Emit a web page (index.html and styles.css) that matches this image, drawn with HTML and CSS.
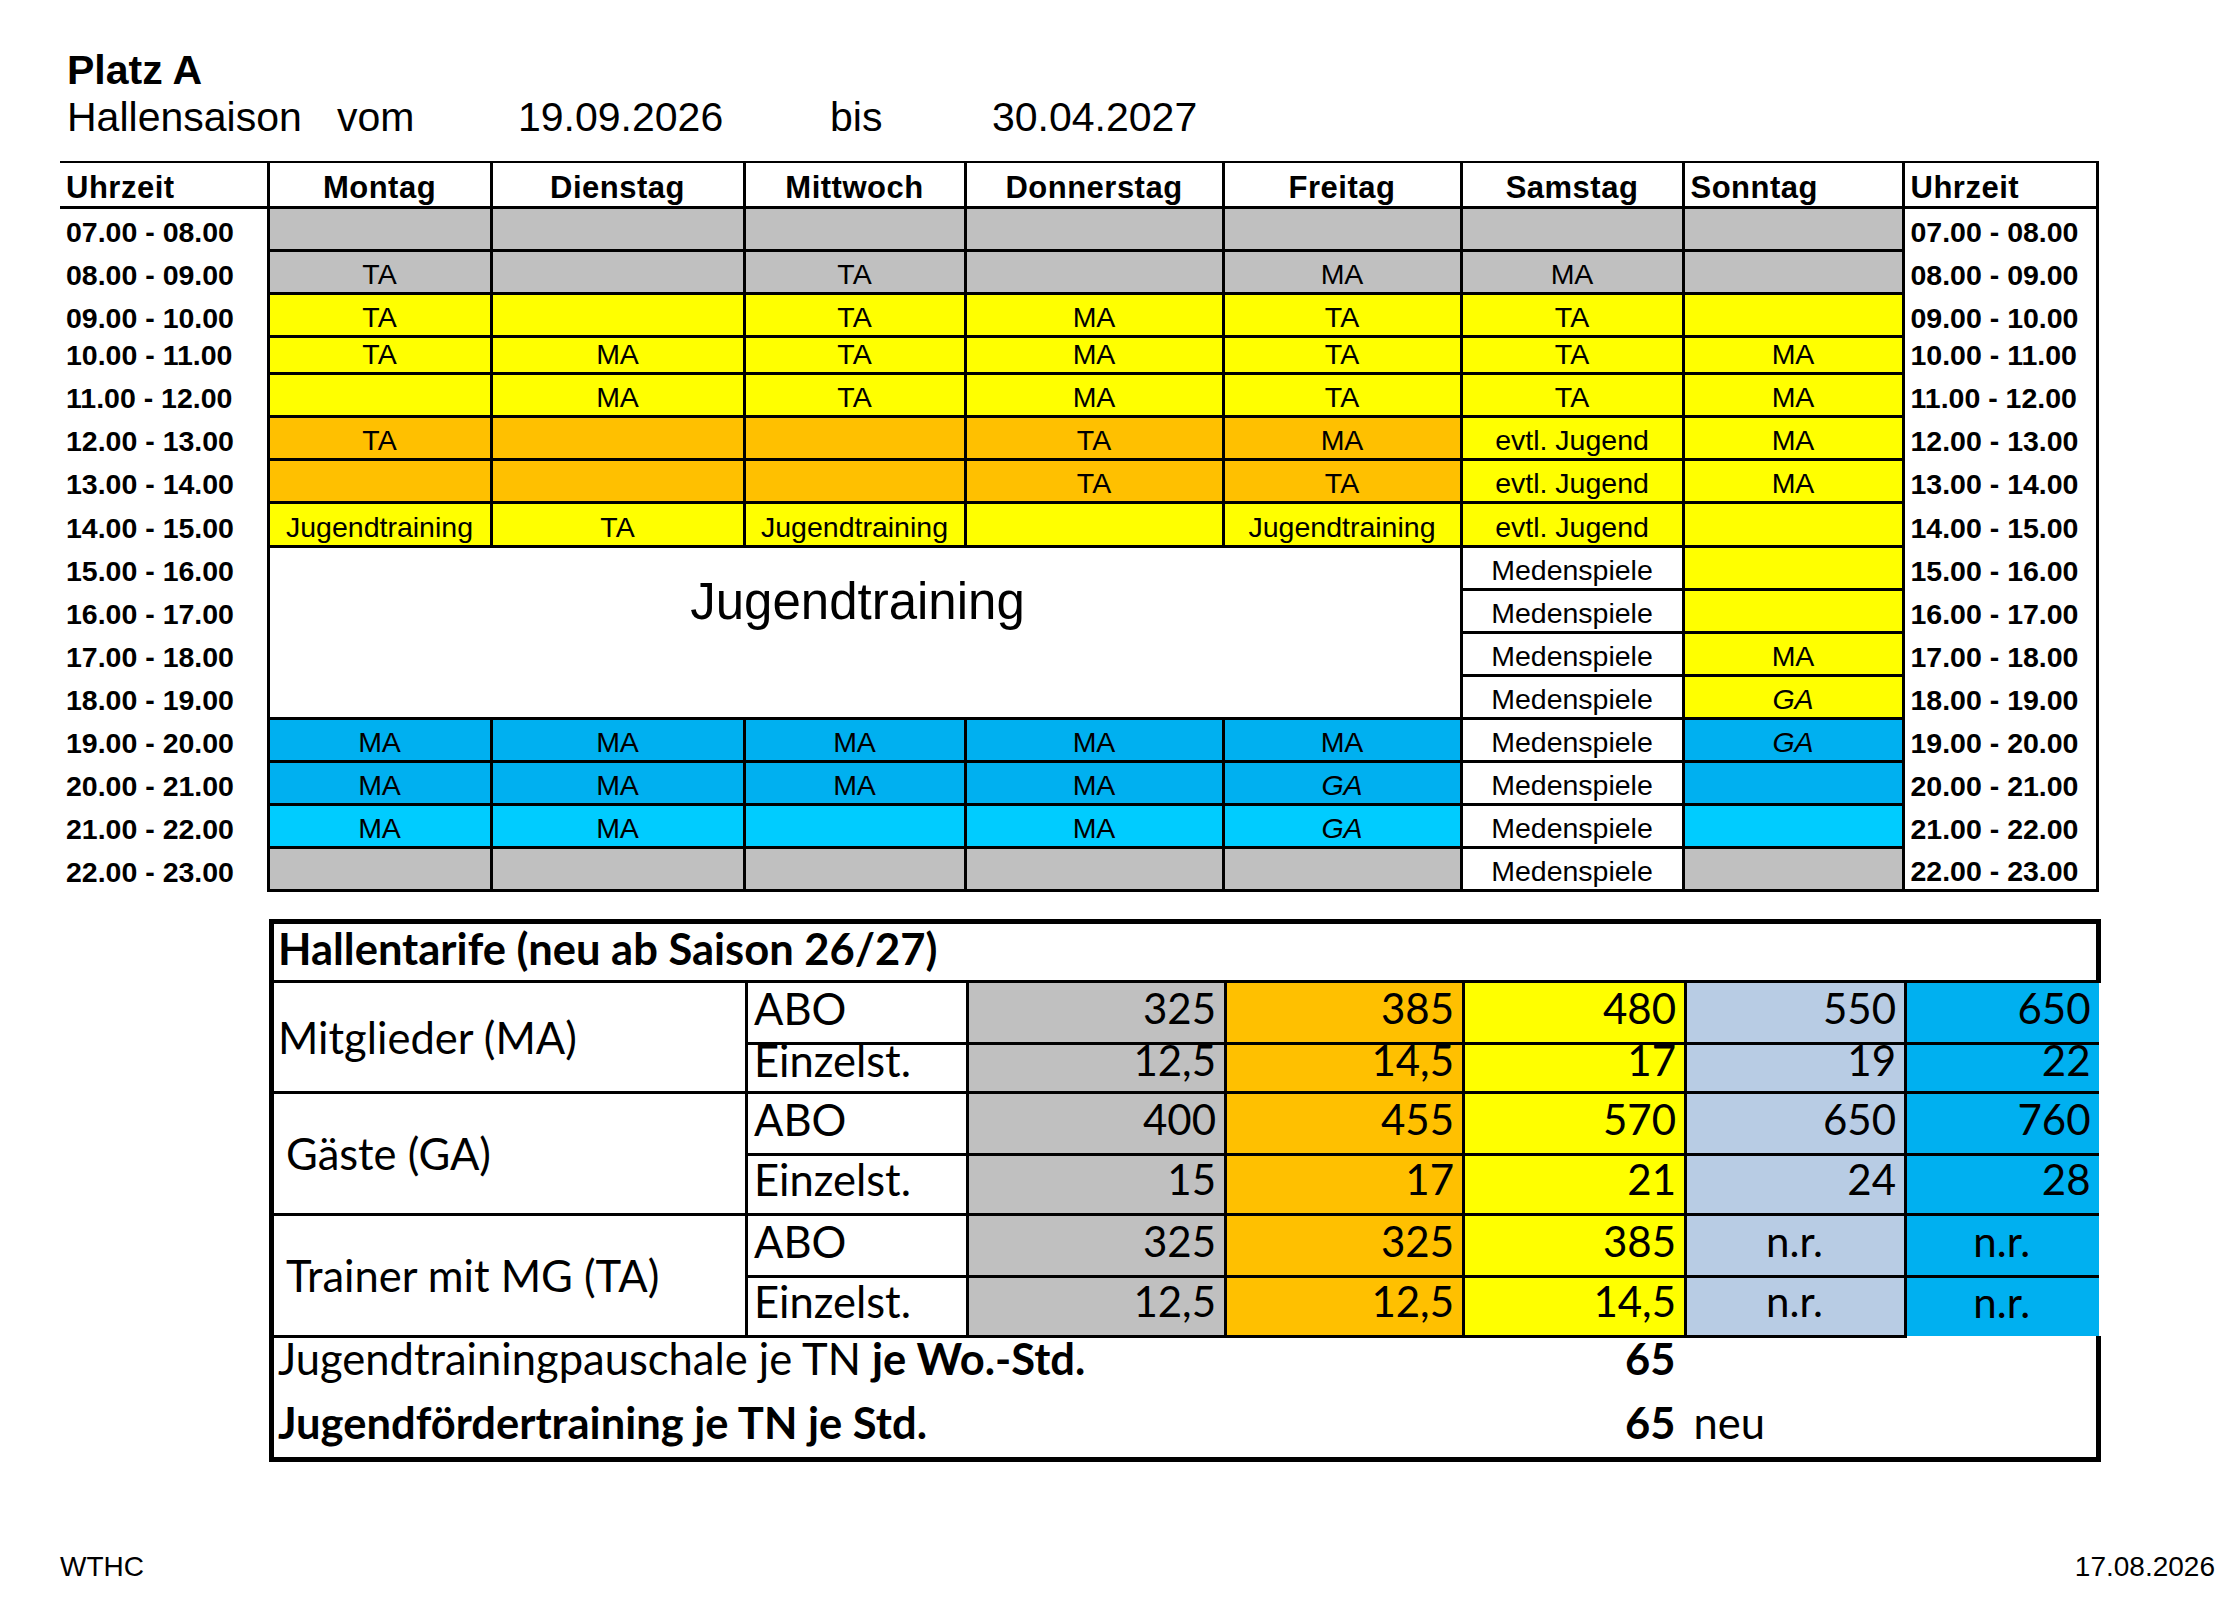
FILE: index.html
```html
<!DOCTYPE html>
<html lang="de">
<head>
  <meta charset="UTF-8">
  <title>Platz A - Hallensaison</title>
  <link rel="stylesheet" href="styles.css">
</head>
<body>

<div class="page">
  <div class="platz">Platz A</div>
  <div class="saison">
    <span class="s1">Hallensaison</span>
    <span class="s2">vom</span>
    <span class="s3">19.09.2026</span>
    <span class="s4">bis</span>
    <span>30.04.2027</span>
  </div>

  <table class="plan">
    <colgroup>
      <col style="width:208px"><col style="width:223px"><col style="width:253px"><col style="width:221px"><col style="width:258px"><col style="width:238px"><col style="width:222px"><col style="width:220px"><col style="width:194px">
    </colgroup>
    <tr class="rh">
      <th class="t l">Uhrzeit</th>
      <th>Montag</th>
      <th>Dienstag</th>
      <th>Mittwoch</th>
      <th>Donnerstag</th>
      <th>Freitag</th>
      <th>Samstag</th>
      <th class="l">Sonntag</th>
      <th class="tr l">Uhrzeit</th>
    </tr>
    <tr>
      <td class="t">07.00 - 08.00</td>
      <td class="g"></td><td class="g"></td><td class="g"></td><td class="g"></td><td class="g"></td><td class="g"></td><td class="g"></td>
      <td class="tr">07.00 - 08.00</td>
    </tr>
    <tr>
      <td class="t">08.00 - 09.00</td>
      <td class="g">TA</td><td class="g"></td><td class="g">TA</td><td class="g"></td><td class="g">MA</td><td class="g">MA</td><td class="g"></td>
      <td class="tr">08.00 - 09.00</td>
    </tr>
    <tr>
      <td class="t">09.00 - 10.00</td>
      <td class="y">TA</td><td class="y"></td><td class="y">TA</td><td class="y">MA</td><td class="y">TA</td><td class="y">TA</td><td class="y"></td>
      <td class="tr">09.00 - 10.00</td>
    </tr>
    <tr class="rs">
      <td class="t">10.00 - 11.00</td>
      <td class="y">TA</td><td class="y">MA</td><td class="y">TA</td><td class="y">MA</td><td class="y">TA</td><td class="y">TA</td><td class="y">MA</td>
      <td class="tr">10.00 - 11.00</td>
    </tr>
    <tr>
      <td class="t">11.00 - 12.00</td>
      <td class="y"></td><td class="y">MA</td><td class="y">TA</td><td class="y">MA</td><td class="y">TA</td><td class="y">TA</td><td class="y">MA</td>
      <td class="tr">11.00 - 12.00</td>
    </tr>
    <tr>
      <td class="t">12.00 - 13.00</td>
      <td class="o">TA</td><td class="o"></td><td class="o"></td><td class="o">TA</td><td class="o">MA</td><td class="y">evtl. Jugend</td><td class="y">MA</td>
      <td class="tr">12.00 - 13.00</td>
    </tr>
    <tr>
      <td class="t">13.00 - 14.00</td>
      <td class="o"></td><td class="o"></td><td class="o"></td><td class="o">TA</td><td class="o">TA</td><td class="y">evtl. Jugend</td><td class="y">MA</td>
      <td class="tr">13.00 - 14.00</td>
    </tr>
    <tr class="rl">
      <td class="t">14.00 - 15.00</td>
      <td class="y">Jugendtraining</td><td class="y">TA</td><td class="y">Jugendtraining</td><td class="y"></td><td class="y">Jugendtraining</td><td class="y">evtl. Jugend</td><td class="y"></td>
      <td class="tr">14.00 - 15.00</td>
    </tr>
    <tr>
      <td class="t">15.00 - 16.00</td>
      <td class="big" colspan="5" rowspan="4">Jugendtraining</td>
      <td class="w">Medenspiele</td><td class="y"></td>
      <td class="tr">15.00 - 16.00</td>
    </tr>
    <tr>
      <td class="t">16.00 - 17.00</td>
      <td class="w">Medenspiele</td><td class="y"></td>
      <td class="tr">16.00 - 17.00</td>
    </tr>
    <tr>
      <td class="t">17.00 - 18.00</td>
      <td class="w">Medenspiele</td><td class="y">MA</td>
      <td class="tr">17.00 - 18.00</td>
    </tr>
    <tr>
      <td class="t">18.00 - 19.00</td>
      <td class="w">Medenspiele</td><td class="y i">GA</td>
      <td class="tr">18.00 - 19.00</td>
    </tr>
    <tr>
      <td class="t">19.00 - 20.00</td>
      <td class="b">MA</td><td class="b">MA</td><td class="b">MA</td><td class="b">MA</td><td class="b">MA</td><td class="w">Medenspiele</td><td class="b i">GA</td>
      <td class="tr">19.00 - 20.00</td>
    </tr>
    <tr>
      <td class="t">20.00 - 21.00</td>
      <td class="b">MA</td><td class="b">MA</td><td class="b">MA</td><td class="b">MA</td><td class="b i">GA</td><td class="w">Medenspiele</td><td class="b"></td>
      <td class="tr">20.00 - 21.00</td>
    </tr>
    <tr>
      <td class="t">21.00 - 22.00</td>
      <td class="c">MA</td><td class="c">MA</td><td class="c"></td><td class="c">MA</td><td class="c i">GA</td><td class="w">Medenspiele</td><td class="c"></td>
      <td class="tr">21.00 - 22.00</td>
    </tr>
    <tr class="last">
      <td class="t">22.00 - 23.00</td>
      <td class="g"></td><td class="g"></td><td class="g"></td><td class="g"></td><td class="g"></td><td class="w">Medenspiele</td><td class="g"></td>
      <td class="tr">22.00 - 23.00</td>
    </tr>
  </table>

  <table class="tarif">
    <colgroup>
      <col style="width:475px"><col style="width:221px"><col style="width:258px"><col style="width:238px"><col style="width:222px"><col style="width:220px"><col style="width:193px">
    </colgroup>
    <tr class="r-title">
      <td class="title" colspan="7">Hallentarife (neu ab Saison 26/27)</td>
    </tr>
    <tr class="r62">
      <td class="lbl" rowspan="2">Mitglieder (MA)</td>
      <td class="typ">ABO</td>
      <td class="n g">325</td><td class="n o">385</td><td class="n y">480</td><td class="n lb">550</td><td class="n b">650</td>
    </tr>
    <tr class="r49">
      <td class="typ">Einzelst.</td>
      <td class="n g">12,5</td><td class="n o">14,5</td><td class="n y">17</td><td class="n lb">19</td><td class="n b">22</td>
    </tr>
    <tr class="r62">
      <td class="lbl ind" rowspan="2">Gäste (GA)</td>
      <td class="typ">ABO</td>
      <td class="n g">400</td><td class="n o">455</td><td class="n y">570</td><td class="n lb">650</td><td class="n b">760</td>
    </tr>
    <tr class="r60">
      <td class="typ">Einzelst.</td>
      <td class="n g">15</td><td class="n o">17</td><td class="n y">21</td><td class="n lb">24</td><td class="n b">28</td>
    </tr>
    <tr class="r62">
      <td class="lbl ind" rowspan="2">Trainer mit MG (TA)</td>
      <td class="typ">ABO</td>
      <td class="n g">325</td><td class="n o">325</td><td class="n y">385</td><td class="nr lb">n.r.</td><td class="nr b">n.r.</td>
    </tr>
    <tr class="r60">
      <td class="typ">Einzelst.</td>
      <td class="n g">12,5</td><td class="n o">12,5</td><td class="n y">14,5</td><td class="nr lb">n.r.</td><td class="nr b end">n.r.</td>
    </tr>
    <tr class="f f1">
      <td class="ft" colspan="4">Jugendtrainingpauschale je TN <b>je Wo.-Std.</b></td>
      <td class="preis"><b>65</b></td>
      <td class="neu"></td>
      <td class="rest"></td>
    </tr>
    <tr class="f f2">
      <td class="ft" colspan="4"><b>Jugendfördertraining je TN je Std.</b></td>
      <td class="preis"><b>65</b></td>
      <td class="neu">neu</td>
      <td class="rest"></td>
    </tr>
  </table>

  <div class="fuss">
    <span>WTHC</span>
    <span>17.08.2026</span>
  </div>
</div>

</body>
</html>
```

FILE: styles.css
```css
body {
  margin: 0;
  background: #fff;
  color: #000;
  font-family: "Liberation Sans", Arial, sans-serif;
}

.page {
  padding: 48px 0 0 60px;
}

.platz {
  font-size: 41px;
  font-weight: bold;
  line-height: 45px;
  padding-left: 7px;
}

.saison {
  display: flex;
  font-size: 41px;
  line-height: 48px;
  padding-left: 7px;
}

.s1 { width: 270px; }
.s2 { width: 181px; }
.s3 { width: 312px; }
.s4 { width: 162px; }

/* Belegungsplan */
.plan {
  border-collapse: collapse;
  table-layout: fixed;
  width: 2037px;
  margin-top: 20px;
}

.plan tr { height: 43px; }
.plan tr.rh { height: 45px; }
.plan tr.rs { height: 37px; }
.plan tr.rl { height: 44px; }

.plan td,
.plan th {
  border: 3px solid #000;
  padding: 0 6px 3px;
  font-size: 28.5px;
  line-height: 30px;
  font-weight: normal;
  text-align: center;
  vertical-align: bottom;
  white-space: nowrap;
  overflow: hidden;
}

.plan th {
  font-weight: bold;
  font-size: 31px;
  letter-spacing: 0.5px;
  border-top-width: 2px;
}

.plan th.l { text-align: left; }

.plan .t {
  border-left: none;
  border-top: none;
  border-bottom: none;
  font-weight: bold;
  text-align: left;
}

.plan .tr {
  border-top: none;
  border-bottom: none;
  font-weight: bold;
  text-align: left;
}

.plan th.t,
.plan th.tr {
  border-top: 2px solid #000;
  border-bottom: 3px solid #000;
}

.plan tr.last .tr { border-bottom: 3px solid #000; }

.g { background: #c0c0c0; }
.y { background: #ffff00; }
.o { background: #ffc000; }
.b { background: #00b0f0; }
.c { background: #00ccff; }
.w { background: #fff; }
.lb { background: #b8cce4; }
.i { font-style: italic; }

.plan .big {
  background: #fff;
  font-size: 51px;
  line-height: 56px;
  vertical-align: top;
  padding: 26px 14px 0 0;
}

/* Hallentarife */
.tarif {
  border-collapse: collapse;
  table-layout: fixed;
  width: 1827px;
  margin: 27px 0 0 209px;
  border: 5px solid #000;
  font-family: Lato, "Open Sans", sans-serif;
}

.tarif td {
  border: 3px solid #000;
  font-size: 43.5px;
  line-height: 20px;
  padding: 0 8px 24px 6px;
  vertical-align: bottom;
  white-space: nowrap;
}

.tarif td.n {
  font-size: 42px;
  text-align: right;
}

.tarif td.nr {
  font-size: 42px;
  text-align: center;
}

.r-title { height: 60px; }
.r62 { height: 62px; }
.r60 { height: 60px; }
.r49 { height: 49px; }

.tarif .r49 td { padding-bottom: 21px; }

.tarif .title {
  font-weight: bold;
  padding: 0 0 22px 4px;
}

.tarif .lbl {
  vertical-align: middle;
  padding: 0 0 0 4px;
}

.tarif .lbl.ind { padding-left: 12px; }

.tarif .b {
  border-right-style: hidden;
}

.tarif .end { border-bottom: none; }

.tarif tr.f td {
  border-top: none;
  border-left: none;
  border-right: none;
  border-bottom: none;
}

.tarif tr.f .rest { border-right: 5px solid #000; }
.tarif tr.f2 td { border-bottom: 5px solid #000; }

.f1 { height: 62px; }
.f2 { height: 61px; }

.tarif .ft { padding: 0 0 30px 4px; }
.tarif .f2 .ft { padding-bottom: 25px; }

.tarif .preis {
  text-align: right;
  padding: 0 10px 30px 0;
}

.tarif .neu { padding: 0 0 30px 8px; }

.tarif .f2 .preis,
.tarif .f2 .neu { padding-bottom: 25px; }

.fuss {
  display: flex;
  justify-content: space-between;
  width: 2155px;
  margin-top: 89px;
  font-size: 28px;
  line-height: 32px;
}
```
